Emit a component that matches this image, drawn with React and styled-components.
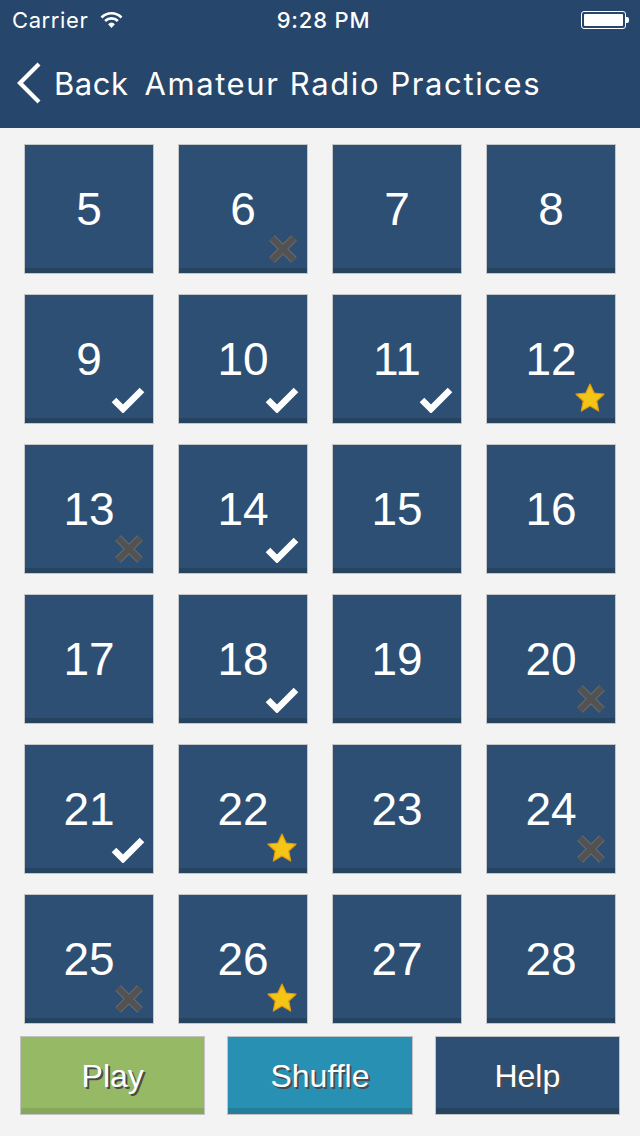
import React from "react";
import styled, { createGlobalStyle } from "styled-components";

const GlobalStyle = createGlobalStyle`
  html, body {
    margin: 0;
    padding: 0;
    background: #f3f3f3;
  }
  body {
    font-family: "Liberation Sans", Arial, sans-serif;
  }
`;

const tiles = [
  [5], [6, "x"], [7], [8],
  [9, "check"], [10, "check"], [11, "check"], [12, "star"],
  [13, "x"], [14, "check"], [15], [16],
  [17], [18, "check"], [19], [20, "x"],
  [21, "check"], [22, "star"], [23], [24, "x"],
  [25, "x"], [26, "star"], [27], [28],
];

const buttons = [
  { label: "Play", bg: "#95b965", strip: "#87a85a" },
  { label: "Shuffle", bg: "#2890b2", strip: "#247d9b" },
  { label: "Help", bg: "#2c4f73", strip: "#26445f" },
];

const CheckIcon = () => (
  <svg width="36" height="28" viewBox="0 0 36 28">
    <path d="M4 15 L13 24 L32 5" fill="none" stroke="#fff" strokeWidth="6.5" />
  </svg>
);

const CrossIcon = () => (
  <svg width="30" height="30" viewBox="0 0 30 30">
    <path d="M4 4 L26 26 M26 4 L4 26" fill="none" stroke="#6c6c6c" strokeWidth="8" />
    <path d="M4 4 L26 26 M26 4 L4 26" fill="none" stroke="#525252" strokeWidth="6" />
  </svg>
);

const StarIcon = () => (
  <svg width="32" height="32" viewBox="0 0 32 32">
    <polygon
      points="16,2 20.2,11 30,12.2 22.8,19 24.7,29 16,24.1 7.3,29 9.2,19 2,12.2 11.8,11"
      fill="#f4c516"
      stroke="#df9a12"
      strokeWidth="1.2"
      strokeLinejoin="round"
    />
  </svg>
);

const WifiIcon = () => (
  <svg width="25" height="18" viewBox="0 0 24 18">
    <path d="M2 6.5 A14 14 0 0 1 22 6.5" fill="none" stroke="#fff" strokeWidth="2.6" />
    <path d="M5.6 10 A9 9 0 0 1 18.4 10" fill="none" stroke="#fff" strokeWidth="2.6" />
    <path d="M12 17 L8.6 13.2 A5 5 0 0 1 15.4 13.2 Z" fill="#fff" />
  </svg>
);

const icons = { check: CheckIcon, x: CrossIcon, star: StarIcon };

const App = () => {
  return (
    <>
      <GlobalStyle />
      <Screen>
        <Header>
          <StatusBar>
            <div className="left">
              Carrier <WifiIcon />
            </div>
            <div className="time">9:28 PM</div>
            <Battery>
              <div className="body">
                <div className="fill" />
              </div>
              <div className="tip" />
            </Battery>
          </StatusBar>
          <NavBar>
            <svg width="30" height="44" viewBox="0 0 30 44">
              <path d="M25 3 L6 22 L25 41" fill="none" stroke="#fff" strokeWidth="4.2" />
            </svg>
            <span className="back">Back</span>
            <span className="title">Amateur Radio Practices</span>
          </NavBar>
        </Header>
        <Grid>
          {tiles.map(([n, mark]) => {
            const Icon = icons[mark];
            return (
              <Tile key={n}>
                <span>{n}</span>
                {Icon && (
                  <Mark $kind={mark}>
                    <Icon />
                  </Mark>
                )}
              </Tile>
            );
          })}
        </Grid>
        <ButtonRow>
          {buttons.map((b) => (
            <ActionButton key={b.label} $bg={b.bg} $strip={b.strip}>
              {b.label}
            </ActionButton>
          ))}
        </ButtonRow>
      </Screen>
    </>
  );
};

export default App;

const Screen = styled.div`
  width: 640px;
  height: 1136px;
  background: #f3f3f3;
  overflow: hidden;
`;

const Header = styled.div`
  background: #26466b;
  height: 128px;
  color: #fff;
`;

const StatusBar = styled.div`
  height: 40px;
  display: flex;
  align-items: center;
  justify-content: space-between;
  padding: 0 11px 0 12px;
  font-family: Inter, "Liberation Sans", sans-serif;
  font-size: 22px;
  letter-spacing: 0.6px;
  .left {
    display: flex;
    align-items: center;
    gap: 11px;
    width: 150px;
  }
  .time {
    font-weight: 500;
    font-size: 22px;
    letter-spacing: 0.8px;
    margin-left: 6px;
  }
`;

const Battery = styled.div`
  width: 150px;
  display: flex;
  justify-content: flex-end;
  align-items: center;
  .body {
    width: 45px;
    height: 18px;
    border: 1.5px solid #fff;
    border-radius: 3px;
    padding: 2px;
    box-sizing: border-box;
  }
  .fill {
    width: 100%;
    height: 100%;
    background: #fff;
    border-radius: 1px;
  }
  .tip {
    width: 3px;
    height: 6px;
    background: #fff;
    border-radius: 0 2px 2px 0;
  }
`;

const NavBar = styled.div`
  height: 88px;
  display: flex;
  align-items: center;
  padding-left: 14px;
  padding-bottom: 2px;
  box-sizing: border-box;
  font-family: Inter, "Liberation Sans", sans-serif;
  font-size: 31px;
  svg {
    margin-right: 10px;
  }
  .back {
    margin-right: 16px;
    letter-spacing: 0.5px;
  }
  .title {
    letter-spacing: 1.6px;
  }
`;

const Grid = styled.div`
  display: grid;
  grid-template-columns: repeat(4, 130px);
  grid-auto-rows: 130px;
  column-gap: 24px;
  row-gap: 20px;
  padding: 16px 24px 0;
`;

const Tile = styled.div`
  position: relative;
  box-sizing: border-box;
  border: 1px solid #c6c6c6;
  background: #2d4f74;
  box-shadow: inset 0 -5px 0 #26435f;
  display: flex;
  align-items: center;
  justify-content: center;
  color: #fff;
  font-size: 46px;
  padding-bottom: 1px;
`;

const Mark = styled.div`
  position: absolute;
  right: ${(p) => (p.$kind === "check" ? "7px" : "9px")};
  bottom: ${(p) => (p.$kind === "check" ? "10px" : "9px")};
  display: flex;
`;

const ButtonRow = styled.div`
  display: grid;
  grid-template-columns: repeat(3, 1fr);
  column-gap: 22px;
  padding: 12px 20px 0;
`;

const ActionButton = styled.div`
  height: 79px;
  box-sizing: border-box;
  border: 1px solid #c2c2c2;
  background: ${(p) => p.$bg};
  box-shadow: inset 0 -6px 0 ${(p) => p.$strip};
  display: flex;
  align-items: center;
  justify-content: center;
  padding-top: 2px;
  color: #fff;
  font-size: 32px;
  text-shadow: 2px 2px 0 #4a4a4a;
`;
